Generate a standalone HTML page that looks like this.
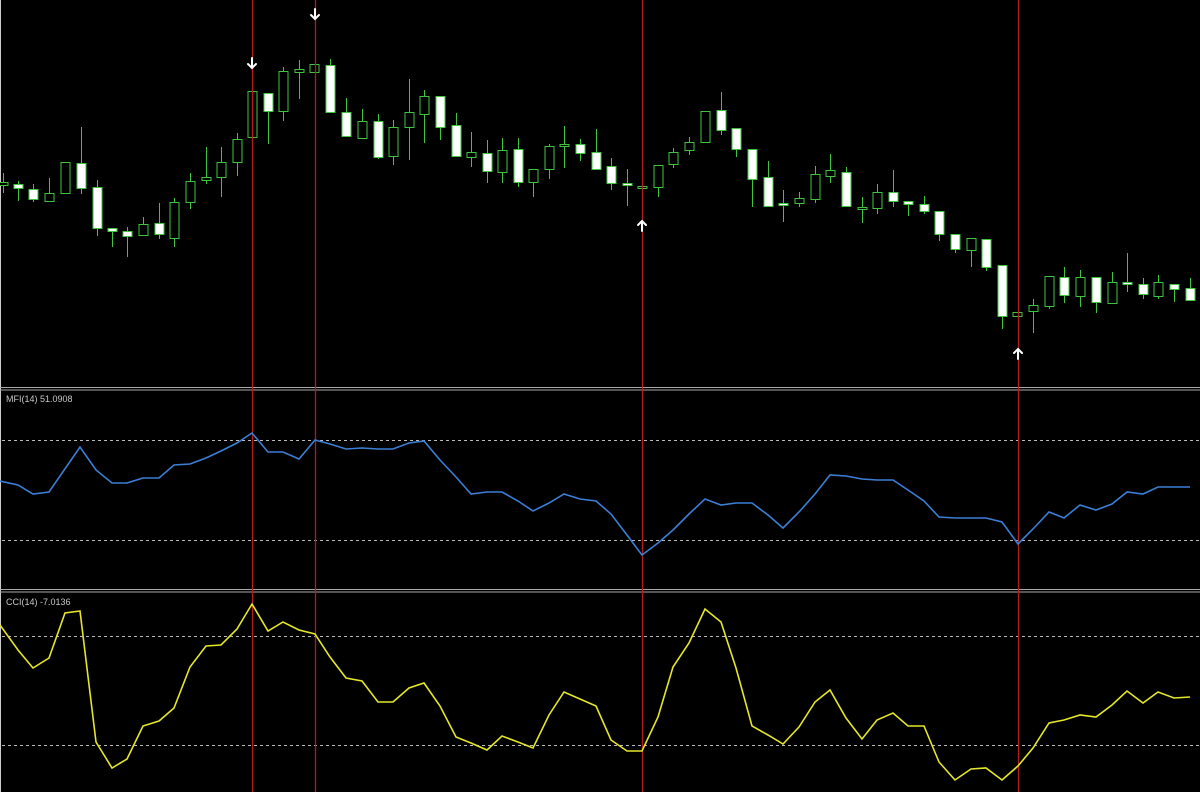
<!DOCTYPE html>
<html><head><meta charset="utf-8"><style>
html,body{margin:0;padding:0;background:#000;width:1200px;height:792px;overflow:hidden}
svg{display:block}
text{font-family:"Liberation Sans",sans-serif;font-size:9px;fill:#c8c8c8}
</style></head><body>
<svg width="1200" height="792" viewBox="0 0 1200 792" xmlns="http://www.w3.org/2000/svg">
<rect width="1200" height="792" fill="#000"/>
<line x1="0.5" y1="0" x2="0.5" y2="792" stroke="#ccc" stroke-width="1"/>
<line x1="0" y1="387.5" x2="1200" y2="387.5" stroke="#aaa"/>
<line x1="0" y1="390" x2="1200" y2="390" stroke="#aaa"/>
<line x1="0" y1="589.5" x2="1200" y2="589.5" stroke="#aaa"/>
<line x1="0" y1="592" x2="1200" y2="592" stroke="#aaa"/>
<g stroke="#bbb" stroke-dasharray="3,3" stroke-width="1">
<line x1="2" y1="440.5" x2="1200" y2="440.5"/><line x1="2" y1="540.5" x2="1200" y2="540.5"/>
<line x1="2" y1="636.5" x2="1200" y2="636.5"/><line x1="2" y1="745.5" x2="1200" y2="745.5"/>
</g>
<text x="6" y="402">MFI(14) 51.0908</text>
<text x="6" y="605">CCI(14) -7.0136</text>
<g id="c" stroke="#3fc43f" stroke-width="1"></g>
<g stroke="#b01e1e" stroke-width="1.3">
<line x1="252.5" y1="0" x2="252.5" y2="792"/><line x1="315.5" y1="0" x2="315.5" y2="792"/>
<line x1="642.5" y1="0" x2="642.5" y2="792"/><line x1="1018.5" y1="0" x2="1018.5" y2="792"/>
</g>
<g fill="none" stroke="#fff" stroke-width="2" stroke-linecap="round">
<path d="M252 58v10M248 64l4 4 4-4"/><path d="M315 9v10M311 15l4 4 4-4"/>
<path d="M642 231v-10M638 225l4-4 4 4"/><path d="M1018 359v-10M1014 353l4-4 4 4"/>
</g>
<polyline fill="none" stroke="#3b7fd6" stroke-width="1.6" points="0,481 18,485 33,494 49,492 80,447 96,470 112,483 127,483 143,478 159,478 174,465 190,464 206,458 221,451 237,443 252,433 268,452 283,452 299,459 315,440 330,444 346,449 362,448 378,449 393,449 409,443 424,441 440,460 456,477 471,494 487,492 502,492 518,501 533,511 549,503 564,494 580,499 596,501 611,514 627,535 642,555 658,543 673,530 689,514 705,499 721,505 736,503 752,503 768,515 783,528 799,512 815,494 830,475 846,476 862,479 877,480 893,480 908,490 924,501 939,517 955,518 971,518 986,518 1002,522 1018,544 1033,529 1049,512 1064,518 1080,505 1096,510 1112,504 1127,492 1143,494 1158,487 1174,487 1190,487"/>
<polyline fill="none" stroke="#e6e62a" stroke-width="1.6" points="0,625 18,650 33,668 49,658 65,613 80,611 96,742 112,768 127,759 143,726 159,721 174,708 190,667 206,646 221,645 237,629 252,604 268,631 283,622 299,630 315,634 330,657 346,678 362,681 378,702 393,702 409,688 424,683 440,706 456,737 471,743 487,750 502,736 518,742 533,748 549,715 564,692 580,699 596,706 611,740 627,751 642,751 658,717 673,667 689,643 705,609 721,622 736,668 752,726 768,735 783,744 799,727 815,702 830,690 846,718 862,739 877,720 893,713 908,726 924,726 939,762 955,780 971,769 986,768 1002,780 1018,766 1033,748 1049,723 1064,720 1080,715 1096,717 1112,705 1127,691 1143,703 1158,692 1174,698 1190,697"/>
</svg>
<script>
var d=[[3,173,182,185,193,0],[18,181,184,188,201,1],[33,184,189,199,202,1],[49,178,193,201,202,0],[65,162,162,193,193,0],[81,127,163,188,194,1],[97,180,187,228,236,1],[112,228,228,231,247,1],[127,227,231,236,257,1],[143,217,224,235,235,0],[159,203,223,234,239,1],[174,198,202,238,247,0],[190,173,181,202,209,0],[206,147,177,180,184,0],[221,147,162,177,197,0],[237,133,139,162,176,0],[252,91,91,137,137,0],[268,93,93,111,144,1],[283,67,71,111,121,0],[299,60,69,72,99,0],[314,64,64,72,72,0],[330,59,65,112,112,1],[346,98,112,136,136,1],[362,109,121,138,138,0],[378,114,121,157,159,1],[393,120,127,156,165,0],[409,79,112,127,160,0],[424,90,96,114,143,0],[440,96,96,127,140,1],[456,113,125,156,156,1],[471,132,152,157,167,0],[487,140,153,171,183,1],[502,138,150,172,183,0],[518,138,149,182,187,1],[533,169,169,182,197,0],[549,144,146,169,179,0],[564,126,144,146,168,0],[580,139,144,153,161,1],[596,129,152,169,169,1],[611,158,166,183,190,1],[627,169,183,185,206,1],[642,186,186,188,188,0],[658,165,165,187,197,0],[673,148,152,164,168,0],[689,137,142,150,155,0],[705,111,111,142,143,0],[721,92,110,130,135,1],[736,128,128,149,157,1],[752,149,149,179,207,1],[768,161,177,206,206,1],[783,190,203,205,222,1],[799,192,198,203,207,0],[815,166,174,199,203,0],[830,154,170,176,183,0],[846,167,172,206,207,1],[862,197,207,209,223,0],[877,184,192,208,214,0],[893,170,192,201,207,1],[908,201,201,204,216,1],[924,196,204,211,214,1],[939,211,211,234,241,1],[955,234,234,249,253,1],[971,238,238,250,267,0],[986,239,239,267,271,1],[1002,265,265,316,329,1],[1017,312,312,316,316,0],[1033,299,305,311,333,0],[1049,276,276,306,309,0],[1064,267,277,295,303,1],[1080,270,277,296,307,0],[1096,277,277,302,313,1],[1112,272,282,303,303,0],[1127,253,282,284,292,1],[1143,278,284,294,299,1],[1158,275,282,296,299,0],[1174,284,284,289,302,1],[1190,278,288,300,300,1]];
var g=document.getElementById('c'),s='';
d.forEach(function(c){var x=c[0]+0.5;s+='<line x1="'+x+'" y1="'+c[1]+'" x2="'+x+'" y2="'+c[4]+'"/>';var h=Math.max(c[3]-c[2],2);s+='<rect x="'+(c[0]-4)+'" y="'+(c[2]+0.5)+'" width="9" height="'+h+'" fill="'+(c[5]?'#fff':'#000')+'"/>';});
g.innerHTML=s;
</script>
</body></html>
